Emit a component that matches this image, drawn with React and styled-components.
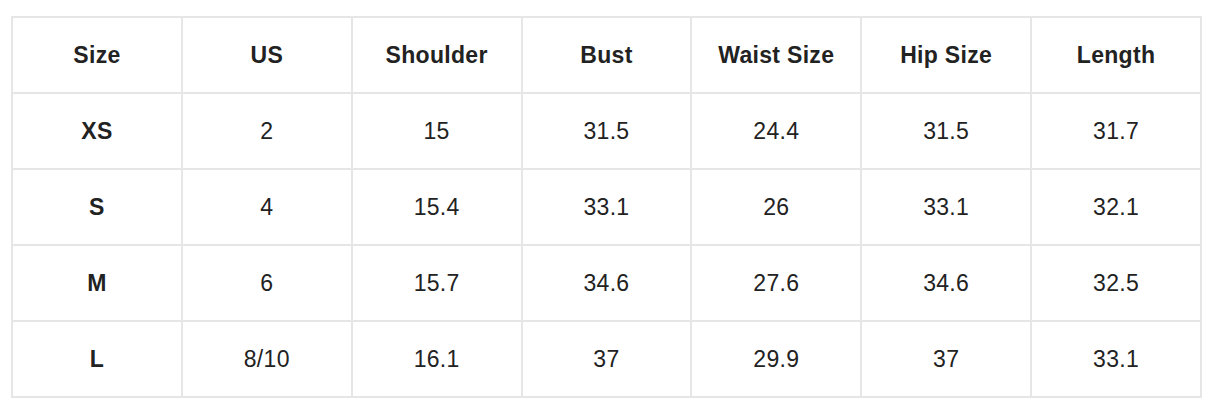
import styled, { createGlobalStyle } from "styled-components";

const GlobalStyle = createGlobalStyle`
  body {
    margin: 0;
    background: #ffffff;
    font-family: "Liberation Sans", Arial, sans-serif;
  }
`

const columns = ["Size", "US", "Shoulder", "Bust", "Waist Size", "Hip Size", "Length"]

const rows = [
  ["XS", "2", "15", "31.5", "24.4", "31.5", "31.7"],
  ["S", "4", "15.4", "33.1", "26", "33.1", "32.1"],
  ["M", "6", "15.7", "34.6", "27.6", "34.6", "32.5"],
  ["L", "8/10", "16.1", "37", "29.9", "37", "33.1"],
]

const App = () => {
  return (
    <Wrapper>
      <GlobalStyle />
      <Table>
        <thead>
          <tr>
            {columns.map((col) => (
              <HeadCell key={col}>{col}</HeadCell>
            ))}
          </tr>
        </thead>
        <tbody>
          {rows.map((row) => (
            <tr key={row[0]}>
              {row.map((value, index) => (
                <Cell key={index} $bold={index === 0}>{value}</Cell>
              ))}
            </tr>
          ))}
        </tbody>
      </Table>
    </Wrapper>
  );
}

export default App;

const Wrapper = styled.div`
  padding: 16px 0 0 11px;
`

const Table = styled.table`
  width: 1191px;
  border-collapse: collapse;
  table-layout: fixed;
  color: #222222;
  font-size: 23px;
  letter-spacing: 0.3px;
`

const HeadCell = styled.th`
  height: 74px;
  padding: 0;
  border: 2px solid #e6e6e6;
  text-align: center;
  font-weight: bold;
`

const Cell = styled.td`
  height: 74px;
  padding: 0;
  border: 2px solid #e6e6e6;
  text-align: center;
  font-weight: ${(p) => (p.$bold ? "bold" : "normal")};
`
